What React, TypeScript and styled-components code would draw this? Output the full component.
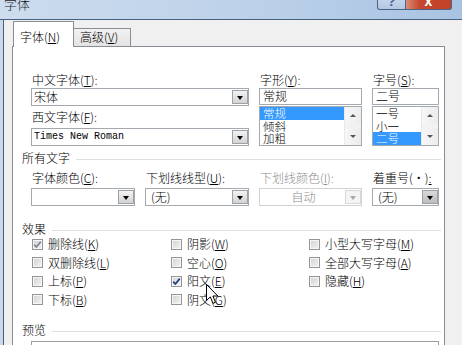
import React from 'react';
import styled, { createGlobalStyle, css } from 'styled-components';

const GlobalStyle = createGlobalStyle`
  html, body {
    margin: 0;
    padding: 0;
  }
  body {
    background: #f0f0f0;
    font-family: "Noto Sans CJK SC", "Liberation Sans", sans-serif;
    font-size: 12px;
    font-weight: 300;
    color: #000;
    overflow: hidden;
  }
  * {
    box-sizing: border-box;
  }
`;

const Window = styled.div`
  position: relative;
  width: 462px;
  height: 345px;
  overflow: hidden;
  display: flex;
  flex-direction: column;
  background: #c9d8ea;
`;

const TitleBar = styled.div`
  flex: none;
  height: 20px;
  display: flex;
  align-items: flex-start;
  padding: 0 10px 0 4px;
  background: linear-gradient(90deg, #cddcee 0%, #bcd1e9 55%, #a9c3e2 100%);
  border-bottom: 1px solid #46617f;
`;

const TitleText = styled.span`
  font-size: 13px;
  line-height: 13px;
  margin-top: -3px;
  color: #1b1b1b;
`;

const CaptionButton = styled.div<{ $kind: 'help' | 'close' }>`
  height: 10px;
  display: flex;
  justify-content: center;
  align-items: flex-end;
  overflow: hidden;
  border: 1px solid #4c6386;
  border-top: none;
  font-family: "Liberation Sans", sans-serif;
  font-weight: bold;
  ${p => p.$kind === 'help'
    ? css`
      margin-left: auto;
      width: 29px;
      border-radius: 0 0 0 3px;
      background: linear-gradient(#c3d4ea, #b4c8e2);
      color: #4d6890;
    `
    : css`
      width: 46px;
      border-left: none;
      border-radius: 0 0 3px 0;
      background: linear-gradient(90deg, #d88d78, #c6472f 30%, #c14029);
      color: #fff;
    `}
`;

const CaptionGlyph = styled.span`
  font-size: 14px;
  line-height: 14px;
  margin-bottom: 1px;
`;

const Frame = styled.div`
  flex: 1;
  min-height: 0;
  display: flex;
  padding-left: 3px;
`;

const Client = styled.div`
  flex: 1;
  display: flex;
  flex-direction: column;
  background: #f0f0f0;
  border-left: 1px solid #4f5f73;
  padding-left: 8px;
`;

const TabStrip = styled.div`
  flex: none;
  height: 26px;
  display: flex;
  align-items: flex-end;
  padding-left: 1px;
`;

const Tab = styled.div<{ $active?: boolean }>`
  position: relative;
  border: 1px solid #898c95;
  border-bottom: none;
  line-height: 14px;
  padding-left: 6px;
  white-space: nowrap;
  ${p => p.$active
    ? css`
      z-index: 1;
      width: 61px;
      height: 26px;
      margin-bottom: -1px;
      padding-top: 8px;
      background: #fff;
    `
    : css`
      width: 58px;
      height: 18px;
      margin-left: -1px;
      padding-top: 1px;
      background: linear-gradient(#f2f2f2, #e3e3e3);
    `}
`;

const TabPanel = styled.div`
  flex: 1;
  width: 433px;
  display: flex;
  flex-direction: column;
  background: #fff;
  border: 1px solid #898c95;
  border-bottom: none;
  padding: 26px 3px 0 9px;
`;

const fieldColumns = css`
  display: grid;
  grid-template-columns: 104px 104px 103px 67px;
  column-gap: 10px;
  margin-left: 9px;
`;

const TopGrid = styled.div`
  ${fieldColumns};
`;

const RowGrid = styled.div`
  ${fieldColumns};
  margin-top: 6px;
`;

const Field = styled.div<{ $span?: number }>`
  display: flex;
  flex-direction: column;
  grid-column: span ${p => p.$span ?? 1};
`;

const Label = styled.div<{ $disabled?: boolean; $gap?: number }>`
  height: 14px;
  line-height: 14px;
  padding-left: 1px;
  white-space: nowrap;
  margin-top: ${p => p.$gap ?? 0}px;
  color: ${p => (p.$disabled ? '#8d8d8d' : '#000')};
`;

const Accel = styled.span`
  text-decoration: underline;
  text-underline-offset: 1px;
`;

const ComboBox = styled.div<{ $disabled?: boolean; $gap?: number }>`
  height: 18px;
  display: flex;
  align-items: center;
  margin-top: ${p => p.$gap ?? 1}px;
  background: #fff;
  border: 1px solid ${p => (p.$disabled ? '#cfd2d6' : '#a4a9b0')};
`;

const ComboValue = styled.span<{ $mono?: boolean; $center?: boolean; $disabled?: boolean; $indent?: number }>`
  flex: 1;
  line-height: 14px;
  white-space: nowrap;
  overflow: hidden;
  padding-left: ${p => p.$indent ?? 2}px;
  text-align: ${p => (p.$center ? 'center' : 'left')};
  color: ${p => (p.$disabled ? '#8c8c8c' : '#000')};
  font-family: ${p => (p.$mono ? '"Liberation Mono", monospace' : 'inherit')};
  font-size: ${p => (p.$mono ? '10px' : '12px')};
  font-weight: ${p => (p.$mono ? 400 : 'inherit')};
`;

const DropButton = styled.span<{ $pressed?: boolean; $disabled?: boolean }>`
  flex: none;
  width: 16px;
  height: 14px;
  display: flex;
  align-items: center;
  justify-content: center;
  border: 1px solid ${p => (p.$disabled ? '#d6d8db' : '#9ca1a8')};
  background: ${p =>
    p.$disabled
      ? '#f4f4f4'
      : p.$pressed
        ? 'linear-gradient(#d9d9d9, #bdbdbd)'
        : 'linear-gradient(#f3f3f3, #d3d3d3)'};
  &::after {
    content: '';
    margin-top: 1px;
    border-left: 3px solid transparent;
    border-right: 3px solid transparent;
    border-top: 4px solid ${p => (p.$disabled ? '#a9a9a9' : '#000')};
  }
`;

const TextBox = styled.div`
  height: 17px;
  margin-top: 1px;
  border: 1px solid #a4a9b0;
  line-height: 14px;
  padding-left: 3px;
  background: #fff;
`;

const ListBox = styled.div`
  height: 40px;
  margin-top: 1px;
  display: flex;
  border: 1px solid #a4a9b0;
  background: #fff;
  overflow: hidden;
`;

const ListItems = styled.div`
  flex: 1;
  display: flex;
  flex-direction: column;
`;

const ListItem = styled.div<{ $selected?: boolean }>`
  height: 12.5px;
  line-height: 12.5px;
  font-size: 11.5px;
  padding-left: 3px;
  white-space: nowrap;
  ${p => p.$selected && css`
    background: #3399ff;
    color: #fff;
  `}
`;

const ScrollBar = styled.div`
  flex: none;
  width: 17px;
  display: flex;
  flex-direction: column;
  justify-content: space-between;
  background: #f2f2f2;
  border-left: 1px solid #e9e9e9;
`;

const ScrollArrow = styled.span<{ $dir: 'up' | 'down' }>`
  height: 17px;
  display: flex;
  align-items: center;
  justify-content: center;
  background: linear-gradient(90deg, #f7f7f7, #ececec);
  &::after {
    content: '';
    border-left: 3px solid transparent;
    border-right: 3px solid transparent;
    ${p => (p.$dir === 'up' ? 'border-bottom: 3px solid #555;' : 'border-top: 3px solid #555;')}
  }
`;

const GroupHeading = styled.div<{ $gap: number }>`
  height: 14px;
  line-height: 14px;
  display: flex;
  align-items: center;
  margin-top: ${p => p.$gap}px;
  white-space: nowrap;
  &::after {
    content: '';
    flex: 1;
    height: 1px;
    margin-left: 6px;
    margin-top: 2px;
    background: #dce0e5;
  }
`;

const CheckGrid = styled.div`
  display: grid;
  grid-template-columns: 139px 138px 1fr;
  grid-template-rows: repeat(4, 18px);
  grid-auto-flow: column;
  row-gap: 0.5px;
  margin-top: -1px;
  padding-left: 10px;
`;

const CheckRow = styled.label`
  display: flex;
  align-items: center;
  line-height: 14px;
  white-space: nowrap;
`;

const CheckBox = styled.span`
  flex: none;
  width: 11px;
  height: 11px;
  margin-right: 5px;
  display: flex;
  align-items: center;
  justify-content: center;
  border: 1px solid #959595;
  box-shadow: inset 0 0 0 1px #f6f6f6;
  background: linear-gradient(135deg, #d2d2d2, #f4f4f4);
`;

const PreviewBox = styled.div`
  height: 40px;
  width: 408px;
  margin: 4px 0 0 9px;
  border: 1px solid #9c9c9c;
  background: #fff;
`;

const Pointer = styled.svg`
  position: absolute;
  left: 206px;
  top: 284px;
  pointer-events: none;
`;

type Check = { text: string; key: string; checked?: 'grey' | 'blue' };

const checks: Check[] = [
  { text: '删除线', key: 'K', checked: 'grey' },
  { text: '双删除线', key: 'L' },
  { text: '上标', key: 'P' },
  { text: '下标', key: 'B' },
  { text: '阴影', key: 'W' },
  { text: '空心', key: 'O' },
  { text: '阳文', key: 'E', checked: 'blue' },
  { text: '阴文', key: 'G' },
  { text: '小型大写字母', key: 'M' },
  { text: '全部大写字母', key: 'A' },
  { text: '隐藏', key: 'H' },
];

const Caption = ({ text, k, colon = true }: { text: string; k: string; colon?: boolean }) => (
  <>
    {text}(<Accel>{k}</Accel>){colon ? ':' : ''}
  </>
);

const CheckMark = ({ color }: { color: string }) => (
  <svg width="9" height="9" viewBox="0 0 9 9">
    <path d="M1.2 4.6 L3.4 7 L7.8 1.6" fill="none" stroke={color} strokeWidth="1.7" />
  </svg>
);

export default function App() {
  return (
    <>
      <GlobalStyle />
      <Window>
        <TitleBar>
          <TitleText>字体</TitleText>
          <CaptionButton $kind="help"><CaptionGlyph>?</CaptionGlyph></CaptionButton>
          <CaptionButton $kind="close"><CaptionGlyph>x</CaptionGlyph></CaptionButton>
        </TitleBar>
        <Frame>
          <Client>
            <TabStrip>
              <Tab $active><Caption text="字体" k="N" colon={false} /></Tab>
              <Tab><Caption text="高级" k="V" colon={false} /></Tab>
            </TabStrip>
            <TabPanel>
              <TopGrid>
                <Field $span={2}>
                  <Label><Caption text="中文字体" k="T" /></Label>
                  <ComboBox>
                    <ComboValue>宋体</ComboValue>
                    <DropButton />
                  </ComboBox>
                  <Label $gap={4}><Caption text="西文字体" k="F" /></Label>
                  <ComboBox $gap={4}>
                    <ComboValue $mono>Times New Roman</ComboValue>
                    <DropButton />
                  </ComboBox>
                </Field>
                <Field>
                  <Label><Caption text="字形" k="Y" /></Label>
                  <TextBox>常规</TextBox>
                  <ListBox>
                    <ListItems>
                      <ListItem $selected>常规</ListItem>
                      <ListItem>倾斜</ListItem>
                      <ListItem>加粗</ListItem>
                    </ListItems>
                    <ScrollBar>
                      <ScrollArrow $dir="up" />
                      <ScrollArrow $dir="down" />
                    </ScrollBar>
                  </ListBox>
                </Field>
                <Field>
                  <Label><Caption text="字号" k="S" /></Label>
                  <TextBox>二号</TextBox>
                  <ListBox>
                    <ListItems>
                      <ListItem>一号</ListItem>
                      <ListItem>小一</ListItem>
                      <ListItem $selected>二号</ListItem>
                    </ListItems>
                    <ScrollBar>
                      <ScrollArrow $dir="up" />
                      <ScrollArrow $dir="down" />
                    </ScrollBar>
                  </ListBox>
                </Field>
              </TopGrid>

              <GroupHeading $gap={5}>所有文字</GroupHeading>
              <RowGrid>
                <Field>
                  <Label><Caption text="字体颜色" k="C" /></Label>
                  <ComboBox $gap={3}>
                    <ComboValue />
                    <DropButton />
                  </ComboBox>
                </Field>
                <Field>
                  <Label><Caption text="下划线线型" k="U" /></Label>
                  <ComboBox $gap={3}>
                    <ComboValue $indent={5}>(无)</ComboValue>
                    <DropButton />
                  </ComboBox>
                </Field>
                <Field>
                  <Label $disabled><Caption text="下划线颜色" k="I" /></Label>
                  <ComboBox $gap={3} $disabled>
                    <ComboValue $center $disabled>自动</ComboValue>
                    <DropButton $disabled />
                  </ComboBox>
                </Field>
                <Field>
                  <Label>着重号(·)<Accel>:</Accel></Label>
                  <ComboBox $gap={3}>
                    <ComboValue $indent={5}>(无)</ComboValue>
                    <DropButton $pressed />
                  </ComboBox>
                </Field>
              </RowGrid>

              <GroupHeading $gap={16}>效果</GroupHeading>
              <CheckGrid>
                {checks.map(c => (
                  <CheckRow key={c.key}>
                    <CheckBox>
                      {c.checked && <CheckMark color={c.checked === 'blue' ? '#21407f' : '#7d879b'} />}
                    </CheckBox>
                    <Caption text={c.text} k={c.key} colon={false} />
                  </CheckRow>
                ))}
              </CheckGrid>

              <GroupHeading $gap={14.5}>预览</GroupHeading>
              <PreviewBox />
            </TabPanel>
          </Client>
        </Frame>
        <Pointer width="13" height="21" viewBox="0 0 13 21">
          <path d="M0.5 0.5 V16.5 L4.3 12.9 L7 19.3 L9.5 18.3 L6.9 12 H11.8 Z" fill="#fff" stroke="#000" strokeWidth="1" />
        </Pointer>
      </Window>
    </>
  );
}
